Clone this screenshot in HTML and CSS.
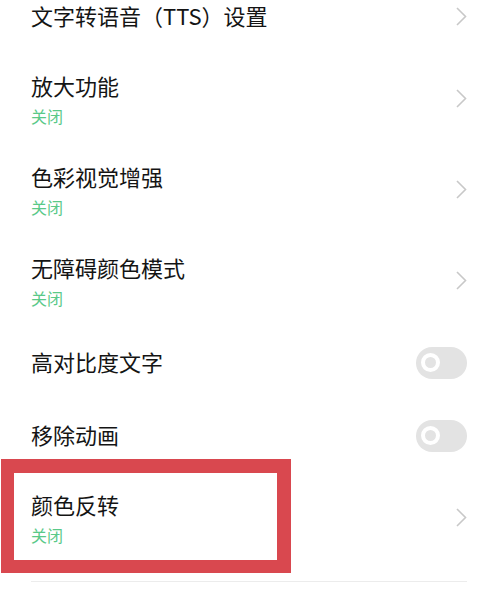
FILE: index.html
```html
<!DOCTYPE html>
<html lang="zh">
<head>
<meta charset="utf-8">
<link rel="stylesheet" href="styles.css">
</head>
<body>
<div class="page">
  <ul class="list">
    <li class="row one first">
      <div class="text"><div class="title">文字转语音（TTS）设置</div></div>
      <svg class="chev" width="11" height="19" viewBox="0 0 11 19"><path d="M1 1 L9.5 9.5 L1 18" fill="none" stroke="#c8c8c8" stroke-width="1.6"/></svg>
    </li>
    <li class="row two">
      <div class="text"><div class="title">放大功能</div><div class="sub">关闭</div></div>
      <svg class="chev" width="11" height="19" viewBox="0 0 11 19"><path d="M1 1 L9.5 9.5 L1 18" fill="none" stroke="#c8c8c8" stroke-width="1.6"/></svg>
    </li>
    <li class="row two">
      <div class="text"><div class="title">色彩视觉增强</div><div class="sub">关闭</div></div>
      <svg class="chev" width="11" height="19" viewBox="0 0 11 19"><path d="M1 1 L9.5 9.5 L1 18" fill="none" stroke="#c8c8c8" stroke-width="1.6"/></svg>
    </li>
    <li class="row two">
      <div class="text"><div class="title">无障碍颜色模式</div><div class="sub">关闭</div></div>
      <svg class="chev" width="11" height="19" viewBox="0 0 11 19"><path d="M1 1 L9.5 9.5 L1 18" fill="none" stroke="#c8c8c8" stroke-width="1.6"/></svg>
    </li>
    <li class="row one">
      <div class="text"><div class="title">高对比度文字</div></div>
      <span class="toggle"><span class="knob"></span></span>
    </li>
    <li class="row one">
      <div class="text"><div class="title">移除动画</div></div>
      <span class="toggle"><span class="knob"></span></span>
    </li>
    <li class="row two">
      <div class="text"><div class="title">颜色反转</div><div class="sub">关闭</div></div>
      <svg class="chev" width="11" height="19" viewBox="0 0 11 19"><path d="M1 1 L9.5 9.5 L1 18" fill="none" stroke="#c8c8c8" stroke-width="1.6"/></svg>
    </li>
  </ul>
  <div class="divider"></div>
  <div class="highlight"></div>
</div>
</body>
</html>
```
FILE: styles.css
```css
html, body {
  margin: 0;
  padding: 0;
  background: #ffffff;
}
body {
  font-family: "Noto Sans CJK SC", "Noto Sans", sans-serif;
  color: #141414;
  overflow: hidden;
}
.page {
  position: relative;
  width: 499px;
  height: 597px;
  overflow: hidden;
}
.list {
  list-style: none;
  margin: -21px 0 0 0;
  padding: 0 32px 0 31px;
}
.row {
  display: flex;
  align-items: center;
  justify-content: space-between;
}
.row.one { height: 73px; }
.row.one.first { height: 74px; }
.row.two { height: 91px; }
.text {
  display: flex;
  flex-direction: column;
  gap: 5px;
}
.row.one .text {
  padding-bottom: 3px;
}
.title {
  font-size: 22px;
  line-height: 30px;
  white-space: nowrap;
}
.sub {
  font-size: 16px;
  line-height: 22px;
  color: #5ac988;
}
.chev {
  display: block;
  flex: none;
}
.toggle {
  display: flex;
  align-items: center;
  box-sizing: border-box;
  width: 51px;
  height: 32px;
  padding-left: 5px;
  border-radius: 16px;
  background: #e3e3e3;
  flex: none;
}
.knob {
  box-sizing: border-box;
  width: 19px;
  height: 19px;
  border-radius: 50%;
  border: 4px solid #ffffff;
  background: #e3e3e3;
}
.divider {
  margin: 18px 32px 0 31px;
  height: 1px;
  background: #ececec;
}
.highlight {
  position: absolute;
  left: 1px;
  top: 459px;
  width: 290px;
  height: 114px;
  box-sizing: border-box;
  border: 13px solid #d9484f;
  border-top-width: 14px;
  border-right-width: 14px;
}
```
